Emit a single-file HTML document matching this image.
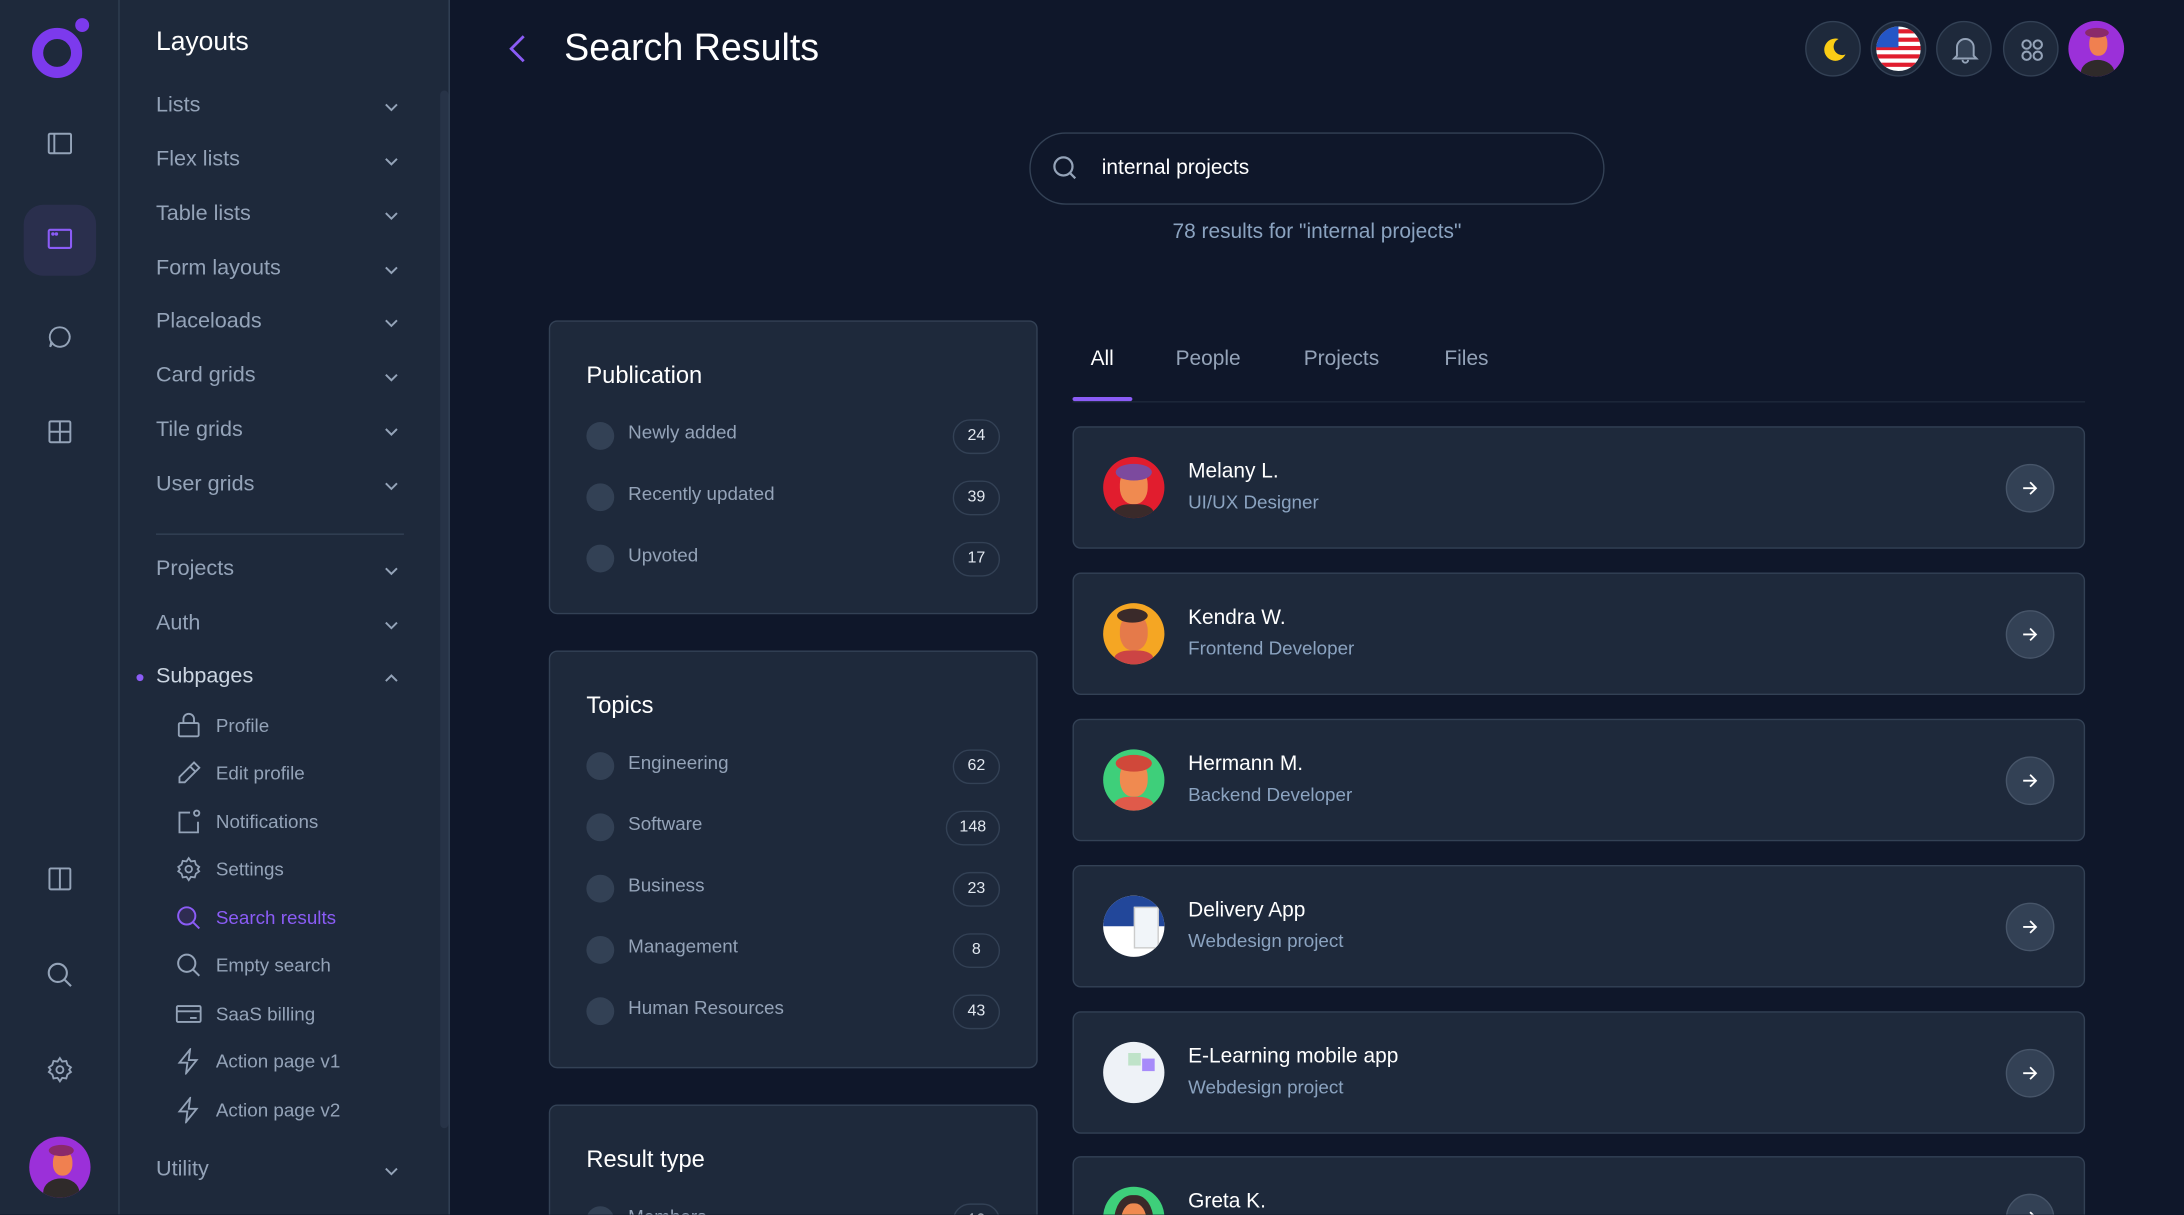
<!DOCTYPE html>
<html><head><meta charset="utf-8"><style>
*{box-sizing:border-box;margin:0;padding:0}
html,body{width:2184px;height:1214px;overflow:hidden;background:#0f172a}
#w{position:absolute;left:0;top:0;width:1568px;height:872px;overflow:hidden;transform:scale(1.392857);transform-origin:0 0;font-family:"Liberation Sans",sans-serif;color:#fff;background:#0f172a}
.abs{position:absolute}
.rail{left:0;top:0;width:86px;height:872px;background:#1e293b;border-right:1px solid #334155}
.side{left:86px;top:0;width:237px;height:872px;background:#1e293b;border-right:1px solid #334155}
.nav{position:absolute;left:112px;font-size:15.5px;color:#94a3b8;transform:translateY(-50%)}
.chev{position:absolute;left:275px;width:12px;height:12px;transform:translateY(-50%)}
.sub{position:absolute;left:155px;font-size:13.5px;color:#94a3b8;transform:translateY(-50%)}
.sic{position:absolute;left:126px;width:19px;height:19px;transform:translateY(-50%)}
.card{position:absolute;background:#1e293b;border:1px solid #334155;border-radius:6px}
.ct{position:absolute;left:26px;font-size:17px;color:#fff}
.row{position:absolute;left:26px;right:26px;height:24px}
.row .dot{position:absolute;left:0;top:3px;width:20px;height:20px;border-radius:50%;background:#334155}
.row .lb{position:absolute;left:30px;top:3px;font-size:13.5px;color:#94a3b8}
.row .bd{position:absolute;right:0;top:1px;height:25px;min-width:34px;padding:0 9px;border:1px solid #334155;border-radius:13px;font-size:11.5px;line-height:23px;text-align:center;color:#e2e8f0}
.res{position:absolute;left:770px;width:727px;height:88px;background:#1e293b;border:1px solid #334155;border-radius:6px}
.av{position:absolute;left:21px;top:21px;width:44px;height:44px;border-radius:50%;overflow:hidden}
.nm{position:absolute;left:82px;top:23px;font-size:15px;color:#fff}
.rl{position:absolute;left:82px;top:46px;font-size:13.5px;color:#8ba3c0}
.ar{position:absolute;left:669px;top:26px;width:35px;height:35px;border-radius:50%;background:#334155;border:1px solid #475569}
.tb{position:absolute;width:40px;height:40px;border-radius:50%;background:#1e293b;border:1px solid #334155;top:15px}
</style></head><body><div id="w">
<div class="abs rail"></div>
<div class="abs side"></div>
<svg class="abs" style="left:22px;top:12px" width="44" height="46" viewBox="0 0 44 46"><circle cx="19" cy="26" r="14" fill="none" stroke="#7c3aed" stroke-width="8"/><circle cx="37" cy="6" r="5" fill="#7c3aed"/></svg>
<svg class="abs" style="left:34px;top:94px" width="18" height="18" viewBox="0 0 18 18" fill="none" stroke="#94a3b8" stroke-width="1.4"><rect x="1" y="2" width="16" height="14" rx="1"/><line x1="5" y1="2" x2="5" y2="16"/></svg>
<div class="abs" style="left:17px;top:147px;width:52px;height:51px;border-radius:14px;background:#2a2f4d"></div>
<svg class="abs" style="left:34px;top:164px" width="18" height="16" viewBox="0 0 18 16" fill="none" stroke="#8b5cf6" stroke-width="1.5"><rect x="1" y="1" width="16" height="13" rx="1"/><circle cx="4" cy="4" r=".5" fill="#8b5cf6"/><circle cx="6.5" cy="4" r=".5" fill="#8b5cf6"/></svg>
<svg class="abs" style="left:34px;top:233px" width="18" height="18" viewBox="0 0 18 18" fill="none" stroke="#94a3b8" stroke-width="1.4"><path d="M9 2a7 7 0 1 1-5.5 11.3L2 16l.8-3.3A7 7 0 0 1 9 2z"/></svg>
<svg class="abs" style="left:34px;top:301px" width="18" height="18" viewBox="0 0 18 18" fill="none" stroke="#94a3b8" stroke-width="1.4"><rect x="1.5" y="1.5" width="15" height="15" rx="1"/><line x1="9" y1="1.5" x2="9" y2="16.5"/><line x1="1.5" y1="9" x2="16.5" y2="9"/></svg>
<svg class="abs" style="left:34px;top:622px" width="18" height="18" viewBox="0 0 18 18" fill="none" stroke="#94a3b8" stroke-width="1.4"><rect x="1.5" y="1.5" width="15" height="15" rx="1"/><line x1="9" y1="1.5" x2="9" y2="16.5"/></svg>
<svg class="abs" style="left:33px;top:690px" width="20" height="20" viewBox="0 0 20 20" fill="none" stroke="#94a3b8" stroke-width="1.5"><circle cx="8.5" cy="8.5" r="6.5"/><line x1="13.5" y1="13.5" x2="18" y2="18"/></svg>
<svg class="abs" style="left:33px;top:758px" width="20" height="20" viewBox="0 0 24 24" fill="none" stroke="#94a3b8" stroke-width="1.6"><circle cx="12" cy="12" r="3"/><path d="M12 2l2 3 3.5-.5 1 3.4L21.5 10 20 12l1.5 2-3 2.1-1 3.4-3.5-.5-2 3-2-3-3.5.5-1-3.4L2.5 14 4 12l-1.5-2 3-2.1 1-3.4 3.5.5z"/></svg>
<div class="abs" style="left:21px;top:816px;width:44px;height:44px;border-radius:50%;background:#9b30d9;overflow:hidden"><div style="position:absolute;left:10px;top:30px;width:26px;height:20px;border-radius:50% 50% 0 0;background:#2f2a2a"></div><div style="position:absolute;left:17px;top:10px;width:14px;height:18px;border-radius:45%;background:#f08050"></div><div style="position:absolute;left:14px;top:6px;width:18px;height:8px;border-radius:50%;background:#8a2a6a"></div></div>

<div class="abs" style="left:112px;top:20px;font-size:19px;color:#fff">Layouts</div>
<div class="abs" style="left:316px;top:65px;width:6px;height:745px;border-radius:3px;background:#273347"></div>
<div class="nav" style="top:76px">Lists</div>
<div class="nav" style="top:115px">Flex lists</div>
<div class="nav" style="top:154px">Table lists</div>
<div class="nav" style="top:193px">Form layouts</div>
<div class="nav" style="top:231px">Placeloads</div>
<div class="nav" style="top:270px">Card grids</div>
<div class="nav" style="top:309px">Tile grids</div>
<div class="nav" style="top:348px">User grids</div>
<div class="abs" style="left:112px;top:383px;width:178px;height:1px;background:#334155"></div>
<div class="nav" style="top:409px">Projects</div>
<div class="nav" style="top:448px">Auth</div>
<div class="nav" style="top:486px;color:#cbd5e1">Subpages</div>
<div class="abs" style="left:98px;top:484px;width:5px;height:5px;border-radius:50%;background:#8b5cf6"></div>
<div class="nav" style="top:840px">Utility</div>
<svg width="0" height="0" style="position:absolute"><defs><path id="cv" d="M2 4l4 4 4-4" fill="none" stroke="#94a3b8" stroke-width="1.4"/><path id="ar" d="M5 12h13M12 6l6 6-6 6" fill="none" stroke="#fff" stroke-width="1.8"/></defs></svg>
<svg class="chev" style="top:77px" viewBox="0 0 12 12"><use href="#cv"/></svg>
<svg class="chev" style="top:116px" viewBox="0 0 12 12"><use href="#cv"/></svg>
<svg class="chev" style="top:155px" viewBox="0 0 12 12"><use href="#cv"/></svg>
<svg class="chev" style="top:194px" viewBox="0 0 12 12"><use href="#cv"/></svg>
<svg class="chev" style="top:232px" viewBox="0 0 12 12"><use href="#cv"/></svg>
<svg class="chev" style="top:271px" viewBox="0 0 12 12"><use href="#cv"/></svg>
<svg class="chev" style="top:310px" viewBox="0 0 12 12"><use href="#cv"/></svg>
<svg class="chev" style="top:349px" viewBox="0 0 12 12"><use href="#cv"/></svg>
<svg class="chev" style="top:410px" viewBox="0 0 12 12"><use href="#cv"/></svg>
<svg class="chev" style="top:449px" viewBox="0 0 12 12"><use href="#cv"/></svg>
<svg class="chev" style="top:487px" viewBox="0 0 12 12"><path d="M2 8l4-4 4 4" fill="none" stroke="#94a3b8" stroke-width="1.4"/></svg>
<svg class="chev" style="top:841px" viewBox="0 0 12 12"><use href="#cv"/></svg>

<svg class="sic" style="top:521px" viewBox="0 0 20 20" fill="none" stroke="#94a3b8" stroke-width="1.4"><rect x="2.5" y="8" width="15" height="10" rx="1"/><path d="M6 8V5a4 4 0 0 1 8 0v3"/></svg>
<div class="sub" style="top:521px">Profile</div>
<svg class="sic" style="top:555px" viewBox="0 0 20 20" fill="none" stroke="#94a3b8" stroke-width="1.4"><path d="M14 2l4 4L7 17H3v-4z"/><line x1="11" y1="5" x2="15" y2="9"/></svg>
<div class="sub" style="top:555px">Edit profile</div>
<svg class="sic" style="top:590px" viewBox="0 0 20 20" fill="none" stroke="#94a3b8" stroke-width="1.4"><path d="M11 3H3v15h14v-8"/><circle cx="16" cy="3.5" r="2"/></svg>
<div class="sub" style="top:590px">Notifications</div>
<svg class="sic" style="top:624px" viewBox="0 0 24 24" fill="none" stroke="#94a3b8" stroke-width="1.6"><circle cx="12" cy="12" r="3"/><path d="M12 2l2 3 3.5-.5 1 3.4L21.5 10 20 12l1.5 2-3 2.1-1 3.4-3.5-.5-2 3-2-3-3.5.5-1-3.4L2.5 14 4 12l-1.5-2 3-2.1 1-3.4 3.5.5z"/></svg>
<div class="sub" style="top:624px">Settings</div>
<svg class="sic" style="top:659px" viewBox="0 0 20 20" fill="none" stroke="#8b5cf6" stroke-width="1.5"><circle cx="8.5" cy="8.5" r="6.5" fill="#2f2c52"/><line x1="13.5" y1="13.5" x2="18" y2="18"/></svg>
<div class="sub" style="top:659px;color:#8b5cf6">Search results</div>
<svg class="sic" style="top:693px" viewBox="0 0 20 20" fill="none" stroke="#94a3b8" stroke-width="1.5"><circle cx="8.5" cy="8.5" r="6.5"/><line x1="13.5" y1="13.5" x2="18" y2="18"/></svg>
<div class="sub" style="top:693px">Empty search</div>
<svg class="sic" style="top:728px" viewBox="0 0 20 20" fill="none" stroke="#94a3b8" stroke-width="1.4"><rect x="1" y="4" width="18" height="12" rx="1"/><line x1="1" y1="8" x2="19" y2="8"/><line x1="11" y1="13" x2="16" y2="13"/></svg>
<div class="sub" style="top:728px">SaaS billing</div>
<svg class="sic" style="top:762px" viewBox="0 0 20 20" fill="none" stroke="#94a3b8" stroke-width="1.4"><path d="M11 1L3 11h6l-1 8 8-10h-6z"/></svg>
<div class="sub" style="top:762px">Action page v1</div>
<svg class="sic" style="top:797px" viewBox="0 0 20 20" fill="none" stroke="#94a3b8" stroke-width="1.4"><path d="M11 1L3 11h6l-1 8 8-10h-6z"/></svg>
<div class="sub" style="top:797px">Action page v2</div>

<svg class="abs" style="left:364px;top:24px" width="16" height="22" viewBox="0 0 16 22"><path d="M12 2L3 11l9 9" fill="none" stroke="#8b5cf6" stroke-width="2"/></svg>
<div class="abs" style="left:405px;top:19px;font-size:27px;color:#fff">Search Results</div>
<div class="tb" style="left:1296px"><svg style="position:absolute;left:10px;top:10px" width="20" height="20" viewBox="0 0 20 20"><path d="M13 2a8 8 0 1 0 5 11 6 6 0 0 1-5-11z" fill="#facc15"/></svg></div>
<div class="tb" style="left:1343px"><svg style="position:absolute;left:3px;top:3px" width="32" height="32" viewBox="0 0 32 32"><defs><clipPath id="fc"><circle cx="16" cy="16" r="16"/></clipPath></defs><g clip-path="url(#fc)"><rect width="32" height="32" fill="#fff"/><rect y="2" width="32" height="3" fill="#e11d2e"/><rect y="8" width="32" height="3" fill="#e11d2e"/><rect y="14" width="32" height="3" fill="#e11d2e"/><rect y="20" width="32" height="3" fill="#e11d2e"/><rect y="26" width="32" height="3" fill="#e11d2e"/><rect width="16" height="15" fill="#2456c6"/></g></svg></div>
<div class="tb" style="left:1390px"><svg style="position:absolute;left:10px;top:9px" width="20" height="22" viewBox="0 0 20 22" fill="#334155" stroke="#94a3b8" stroke-width="1.4"><path d="M4 15V9a6 6 0 0 1 12 0v6l2 2H2z"/><path d="M8 18a2 2 0 0 0 4 0" fill="none"/></svg></div>
<div class="tb" style="left:1438px"><svg style="position:absolute;left:11px;top:11px" width="18" height="18" viewBox="0 0 18 18" fill="none" stroke="#94a3b8" stroke-width="1.5"><circle cx="5" cy="5" r="3"/><circle cx="13" cy="5" r="3"/><circle cx="5" cy="13" r="3"/><circle cx="13" cy="13" r="3"/></svg></div>
<div class="abs" style="left:1485px;top:15px;width:40px;height:40px;border-radius:50%;background:#9b30d9;overflow:hidden"><div style="position:absolute;left:9px;top:28px;width:24px;height:18px;border-radius:50% 50% 0 0;background:#2f2a2a"></div><div style="position:absolute;left:15px;top:8px;width:13px;height:17px;border-radius:45%;background:#f08050"></div><div style="position:absolute;left:12px;top:5px;width:17px;height:7px;border-radius:50%;background:#8a2a6a"></div></div>

<div class="abs" style="left:739px;top:95px;width:413px;height:52px;border:1px solid #334155;border-radius:26px"></div>
<svg class="abs" style="left:755px;top:111px" width="20" height="20" viewBox="0 0 20 20" fill="none" stroke="#94a3b8" stroke-width="1.6"><circle cx="8.5" cy="8.5" r="6.5"/><line x1="13.5" y1="13.5" x2="17" y2="17"/></svg>
<div class="abs" style="left:791px;top:112px;font-size:15px;color:#fff">internal projects</div>
<div class="abs" style="left:739px;width:413px;top:158px;text-align:center;font-size:15px;color:#8ba3c0">78 results for "internal projects"</div>

<div class="card" style="left:394px;top:230px;width:351px;height:211px">
<div class="ct" style="top:29px">Publication</div>
<div class="row" style="top:69px"><div class="dot"></div><div class="lb">Newly added</div><div class="bd">24</div></div>
<div class="row" style="top:113px"><div class="dot"></div><div class="lb">Recently updated</div><div class="bd">39</div></div>
<div class="row" style="top:157px"><div class="dot"></div><div class="lb">Upvoted</div><div class="bd">17</div></div>
</div>
<div class="card" style="left:394px;top:467px;width:351px;height:300px">
<div class="ct" style="top:29px">Topics</div>
<div class="row" style="top:69px"><div class="dot"></div><div class="lb">Engineering</div><div class="bd">62</div></div>
<div class="row" style="top:113px"><div class="dot"></div><div class="lb">Software</div><div class="bd">148</div></div>
<div class="row" style="top:157px"><div class="dot"></div><div class="lb">Business</div><div class="bd">23</div></div>
<div class="row" style="top:201px"><div class="dot"></div><div class="lb">Management</div><div class="bd">8</div></div>
<div class="row" style="top:245px"><div class="dot"></div><div class="lb">Human Resources</div><div class="bd">43</div></div>
</div>
<div class="card" style="left:394px;top:793px;width:351px;height:120px">
<div class="ct" style="top:29px">Result type</div>
<div class="row" style="top:69px"><div class="dot"></div><div class="lb">Members</div><div class="bd">12</div></div>
</div>

<div class="abs" style="left:770px;top:288px;width:727px;height:1px;background:#1e293b"></div>
<div class="abs" style="left:770px;top:285px;width:43px;height:3px;background:#8b5cf6;border-radius:2px"></div>
<div class="abs" style="left:783px;top:249px;font-size:15px;color:#fff">All</div>
<div class="abs" style="left:844px;top:249px;font-size:15px;color:#94a3b8">People</div>
<div class="abs" style="left:936px;top:249px;font-size:15px;color:#94a3b8">Projects</div>
<div class="abs" style="left:1037px;top:249px;font-size:15px;color:#94a3b8">Files</div>

<div class="res" style="top:306px"><div class="av" style="background:#e11d2e"><div style="position:absolute;left:12px;top:8px;width:20px;height:26px;border-radius:45%;background:#f08a50"></div><div style="position:absolute;left:9px;top:5px;width:26px;height:12px;border-radius:50%;background:#7c4a9e"></div><div style="position:absolute;left:8px;top:34px;width:28px;height:14px;border-radius:40% 40% 0 0;background:#3a2a2a"></div></div><div class="nm">Melany L.</div><div class="rl">UI/UX Designer</div><div class="ar"><svg style="position:absolute;left:8px;top:8px" width="17" height="17" viewBox="0 0 24 24"><use href="#ar"/></svg></div></div>
<div class="res" style="top:411px"><div class="av" style="background:#f5a623"><div style="position:absolute;left:12px;top:8px;width:20px;height:26px;border-radius:45%;background:#e57a4a"></div><div style="position:absolute;left:10px;top:4px;width:22px;height:10px;border-radius:50%;background:#3a2a2a"></div><div style="position:absolute;left:8px;top:34px;width:28px;height:14px;border-radius:40% 40% 0 0;background:#c44"></div></div><div class="nm">Kendra W.</div><div class="rl">Frontend Developer</div><div class="ar"><svg style="position:absolute;left:8px;top:8px" width="17" height="17" viewBox="0 0 24 24"><use href="#ar"/></svg></div></div>
<div class="res" style="top:516px"><div class="av" style="background:#3ecf7a"><div style="position:absolute;left:12px;top:8px;width:20px;height:26px;border-radius:45%;background:#f08a50"></div><div style="position:absolute;left:9px;top:4px;width:26px;height:12px;border-radius:50%;background:#d0483a"></div><div style="position:absolute;left:8px;top:34px;width:28px;height:14px;border-radius:40% 40% 0 0;background:#e05a4a"></div></div><div class="nm">Hermann M.</div><div class="rl">Backend Developer</div><div class="ar"><svg style="position:absolute;left:8px;top:8px" width="17" height="17" viewBox="0 0 24 24"><use href="#ar"/></svg></div></div>
<div class="res" style="top:621px"><div class="av" style="background:#fff"><div style="position:absolute;left:0;top:0;width:44px;height:22px;background:#22479a"></div><div style="position:absolute;left:22px;top:8px;width:18px;height:30px;background:#f1f5f9;border:1px solid #ccc"></div></div><div class="nm">Delivery App</div><div class="rl">Webdesign project</div><div class="ar"><svg style="position:absolute;left:8px;top:8px" width="17" height="17" viewBox="0 0 24 24"><use href="#ar"/></svg></div></div>
<div class="res" style="top:726px"><div class="av" style="background:#eef2f7"><div style="position:absolute;left:18px;top:8px;width:9px;height:9px;background:#bfe3c9"></div><div style="position:absolute;left:28px;top:12px;width:9px;height:9px;background:#a78bfa"></div></div><div class="nm">E-Learning mobile app</div><div class="rl">Webdesign project</div><div class="ar"><svg style="position:absolute;left:8px;top:8px" width="17" height="17" viewBox="0 0 24 24"><use href="#ar"/></svg></div></div>
<div class="res" style="top:830px"><div class="av" style="background:#3ecf7a"><div style="position:absolute;left:8px;top:6px;width:28px;height:40px;border-radius:45%;background:#3a2a2a"></div><div style="position:absolute;left:13px;top:12px;width:18px;height:26px;border-radius:45%;background:#f08a50"></div></div><div class="nm">Greta K.</div><div class="rl">Product Manager</div><div class="ar"><svg style="position:absolute;left:8px;top:8px" width="17" height="17" viewBox="0 0 24 24"><use href="#ar"/></svg></div></div>
</div></body></html>
